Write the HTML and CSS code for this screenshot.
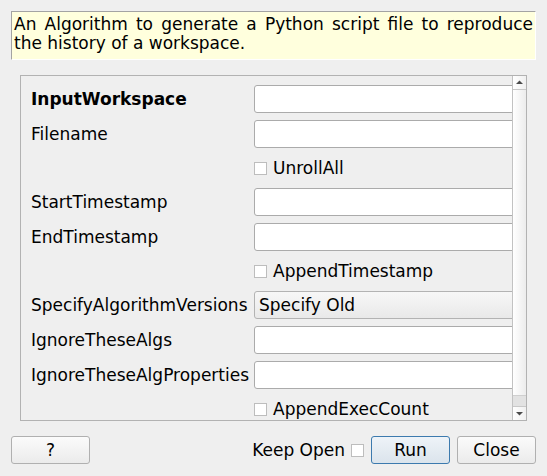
FILE: index.html
```html
<!DOCTYPE html>
<html>
<head>
<meta charset="utf-8">
<link rel="stylesheet" href="styles.css">
</head>
<body>
<div class="dialog">
  <div class="desc">An Algorithm to generate a Python script file to reproduce the history of a workspace.</div>
  <div class="scroll">
    <div class="viewport">
      <div class="form">
        <div class="label bold">InputWorkspace</div><div class="input"></div>
        <div class="label">Filename</div><div class="input"></div>
        <div class="label"></div><div class="check"><span class="box"></span>UnrollAll</div>
        <div class="label">StartTimestamp</div><div class="input"></div>
        <div class="label">EndTimestamp</div><div class="input"></div>
        <div class="label"></div><div class="check"><span class="box"></span>AppendTimestamp</div>
        <div class="label">SpecifyAlgorithmVersions</div><div class="combo">Specify Old</div>
        <div class="label">IgnoreTheseAlgs</div><div class="input"></div>
        <div class="label">IgnoreTheseAlgProperties</div><div class="input"></div>
        <div class="label"></div><div class="check"><span class="box"></span>AppendExecCount</div>
      </div>
    </div>
    <div class="vbar">
      <div class="arrow"><svg width="13" height="13" viewBox="0 0 13 13"><path d="M3 8 L10 8 L6.5 4.5 Z" fill="#4a4a4a"/></svg></div>
      <div class="handle"></div>
      <div class="trough"></div>
      <div class="arrow down"><svg width="13" height="13" viewBox="0 0 13 13"><path d="M3 5 L10 5 L6.5 8.5 Z" fill="#4a4a4a"/></svg></div>
    </div>
  </div>
  <div class="buttons">
    <div class="btn">?</div>
    <div class="spacer"></div>
    <div class="keep">Keep Open<span class="box"></span></div>
    <div class="btn run">Run</div>
    <div class="btn">Close</div>
  </div>
</div>
</body>
</html>
```

FILE: styles.css
```css
html, body {
  margin: 0;
  padding: 0;
  background: #efefef;
}
body {
  font-family: "DejaVu Sans", sans-serif;
  font-size: 17px;
  color: #000;
  width: 547px;
  height: 476px;
  overflow: hidden;
}
.dialog {
  padding: 11px 11px 0 11px;
  display: flex;
  flex-direction: column;
}
.desc {
  box-sizing: border-box;
  height: 49px;
  background: #ffffdd;
  border-top: 1px solid #a3a3a3;
  border-left: 1px solid #a3a3a3;
  border-right: 1px solid #ffffff;
  border-bottom: 1px solid #ffffff;
  padding: 3px 2px 0 2px;
  line-height: 19px;
  text-align: justify;
}
.scroll {
  box-sizing: border-box;
  margin: 15px 9px 0 9px;
  height: 346px;
  border: 1px solid #b2b2b2;
  display: flex;
}
.viewport {
  flex: 1;
  overflow: hidden;
}
.form {
  display: grid;
  grid-template-columns: 216px 1fr;
  column-gap: 7px;
  row-gap: 7px;
  padding: 9px 0 0 10px;
  margin-right: -6px;
}
.label {
  display: flex;
  align-items: center;
  white-space: nowrap;
}
.bold {
  font-weight: bold;
}
.input {
  box-sizing: border-box;
  height: 28px;
  background: #fff;
  border: 1px solid #ababab;
  border-radius: 3px;
}
.combo {
  box-sizing: border-box;
  height: 28px;
  background: linear-gradient(#f7f7f7, #e9e9e9);
  border: 1px solid #b3b3b3;
  border-radius: 3px;
  padding-left: 4px;
  display: flex;
  align-items: center;
}
.check {
  height: 26px;
  display: flex;
  align-items: center;
}
.box {
  box-sizing: border-box;
  width: 13px;
  height: 13px;
  background: #fff;
  border: 1px solid #bdbdbd;
  display: inline-block;
  margin-right: 6px;
}
.vbar {
  width: 14px;
  box-sizing: border-box;
  border-left: 1px solid #c2c2c2;
  display: flex;
  flex-direction: column;
  background: #e3e3e3;
}
.arrow {
  height: 14px;
  box-sizing: border-box;
  background: linear-gradient(90deg, #ffffff, #f0f0f0);
  border-bottom: 1px solid #c8c8c8;
  display: flex;
  align-items: center;
  justify-content: center;
}
.arrow.down {
  border-bottom: none;
  border-top: 1px solid #c8c8c8;
}
.handle {
  height: 305px;
  background: linear-gradient(90deg, #ffffff, #ececec);
  border-bottom: 1px solid #cfcfcf;
}
.trough {
  flex: 1;
  background: #e2e2e2;
}
.buttons {
  display: flex;
  align-items: center;
  margin-top: 15px;
  gap: 7px;
}
.spacer {
  flex: 1;
}
.btn {
  box-sizing: border-box;
  width: 79px;
  height: 28px;
  border: 1px solid #b0b0b0;
  border-radius: 3px;
  background: linear-gradient(#fbfbfb, #ebebeb);
  display: flex;
  align-items: center;
  justify-content: center;
}
.btn.run {
  border-color: #3c7aae;
  background: linear-gradient(#eef3f8, #dbe4ec);
}
.keep {
  display: flex;
  align-items: center;
}
.keep .box {
  margin: 0 0 0 6px;
}
```
